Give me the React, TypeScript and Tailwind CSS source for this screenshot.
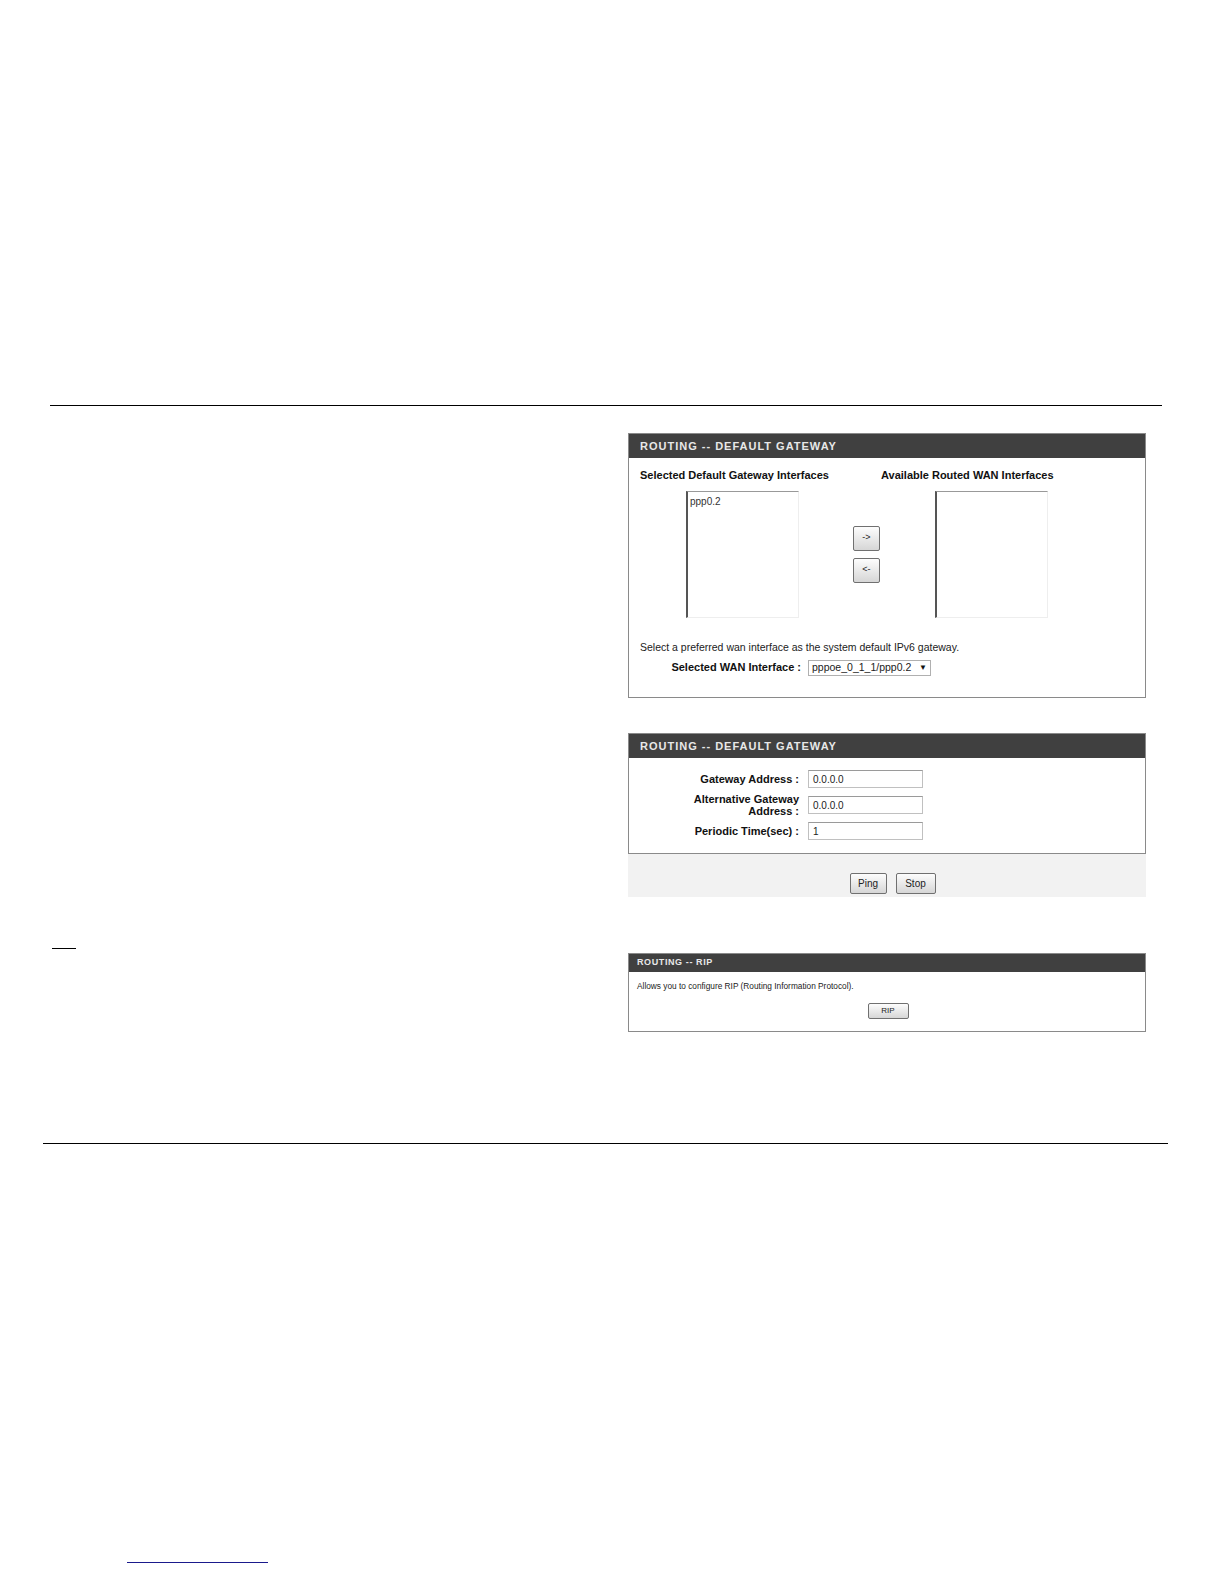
import React from "react";

const btn =
  "flex items-center justify-center border border-[#707070] rounded-[2px] bg-gradient-to-b from-[#fdfdfd] to-[#d6d6d6] text-[#222]";

function Header({ title, small }: { title: string; small?: boolean }) {
  return (
    <div
      className={
        small
          ? "h-[18px] bg-[#404040] flex items-center pl-[8px] text-[9px] font-bold tracking-[0.6px] text-[#e8e8e8]"
          : "h-[24px] bg-[#404040] flex items-center pl-[11px] text-[11px] font-bold tracking-[1px] text-[#e8e8e8]"
      }
    >
      {title}
    </div>
  );
}

function ListBox({ item }: { item?: string }) {
  return (
    <div className="w-[113px] h-[127px] bg-white border-l-2 border-l-[#555] border-t border-t-[#999] border-r border-r-[#eee] border-b border-b-[#eee] pl-[2px] pt-[2px] text-[10px] text-[#333]">
      {item}
    </div>
  );
}

function Field({ label, value, twoLine }: { label: string; value: string; twoLine?: string }) {
  return (
    <div className="flex items-center h-[18px]">
      <div className="w-[170px] text-right leading-[12px]">
        {twoLine ? (
          <>
            {label}
            <br />
            {twoLine}
          </>
        ) : (
          label
        )}
      </div>
      <div className="ml-[9px] w-[115px] h-[18px] border border-[#c0c0c0] border-t-[#9a9a9a] flex items-center pl-[4px] font-normal text-[10px] text-[#222]">
        {value}
      </div>
    </div>
  );
}

export default function App() {
  return (
    <div
      className="w-[1224px] h-[1584px] bg-white text-[#111]"
      style={{ fontFamily: '"Liberation Sans", Arial, sans-serif' }}
    >
      <div className="pt-[405px]">
        <div className="ml-[50px] w-[1112px] h-px bg-black" />
        <div className="flex">
          <div className="w-[628px] shrink-0">
            <div className="mt-[542px] ml-[52px] w-[24px] h-px bg-black" />
          </div>
          <div className="w-[518px] shrink-0 pt-[27px]">
            {/* Panel 1 */}
            <div className="border border-[#8a8a8a] h-[265px]">
              <Header title="ROUTING -- DEFAULT GATEWAY" />
              <div className="flex pt-[9px] text-[11px] font-bold">
                <div className="w-[252px] pl-[11px]">Selected Default Gateway Interfaces</div>
                <div>Available Routed WAN Interfaces</div>
              </div>
              <div className="flex mt-[7px]">
                <div className="ml-[57px]">
                  <ListBox item="ppp0.2" />
                </div>
                <div className="ml-[54px] pt-[35px] flex flex-col gap-[7px]">
                  <div className={btn + " w-[27px] h-[25px] text-[9px]"}>-&gt;</div>
                  <div className={btn + " w-[27px] h-[25px] text-[9px]"}>&lt;-</div>
                </div>
                <div className="ml-[55px]">
                  <ListBox />
                </div>
              </div>
              <div className="pl-[11px] mt-[22px] text-[10.5px] text-[#222]">
                Select a preferred wan interface as the system default IPv6 gateway.
              </div>
              <div className="flex items-center mt-[4px]">
                <div className="w-[172px] text-right text-[11px] font-bold">Selected WAN Interface :</div>
                <div className="ml-[7px] w-[123px] h-[16px] border border-[#b0b0b0] flex items-center justify-between px-[3px] text-[10.5px] text-[#222]">
                  <span>pppoe_0_1_1/ppp0.2</span>
                  <span className="text-[8px] text-[#111]">▼</span>
                </div>
              </div>
            </div>

            {/* Panel 2 */}
            <div className="mt-[35px] border border-[#8a8a8a]">
              <Header title="ROUTING -- DEFAULT GATEWAY" />
              <div className="pt-[12px] pb-[13px] flex flex-col gap-[8px] text-[11px] font-bold">
                <Field label="Gateway Address :" value="0.0.0.0" />
                <Field label="Alternative Gateway" twoLine="Address :" value="0.0.0.0" />
                <Field label="Periodic Time(sec) :" value="1" />
              </div>
            </div>
            <div className="h-[43px] bg-[#f2f2f2] flex items-end justify-center gap-[9px] pb-[3px] pl-[11px]">
              <div className={btn + " w-[37px] h-[21px] text-[10px]"}>Ping</div>
              <div className={btn + " w-[40px] h-[21px] text-[10px]"}>Stop</div>
            </div>

            {/* Panel 3 */}
            <div className="mt-[56px] border border-[#8a8a8a] h-[79px]">
              <Header title="ROUTING -- RIP" small />
              <div className="pl-[8px] pt-[8px] text-[8.3px] text-[#222]">
                Allows you to configure RIP (Routing Information Protocol).
              </div>
              <div className="flex justify-center mt-[11px] pl-[2px]">
                <div className={btn + " w-[41px] h-[16px] text-[8px]"}>RIP</div>
              </div>
            </div>
          </div>
        </div>
        <div className="mt-[111px] ml-[43px] w-[1125px] h-px bg-black" />
        <div className="mt-[418px] ml-[127px] w-[141px] h-px bg-[#1a1a8c]" />
      </div>
    </div>
  );
}
